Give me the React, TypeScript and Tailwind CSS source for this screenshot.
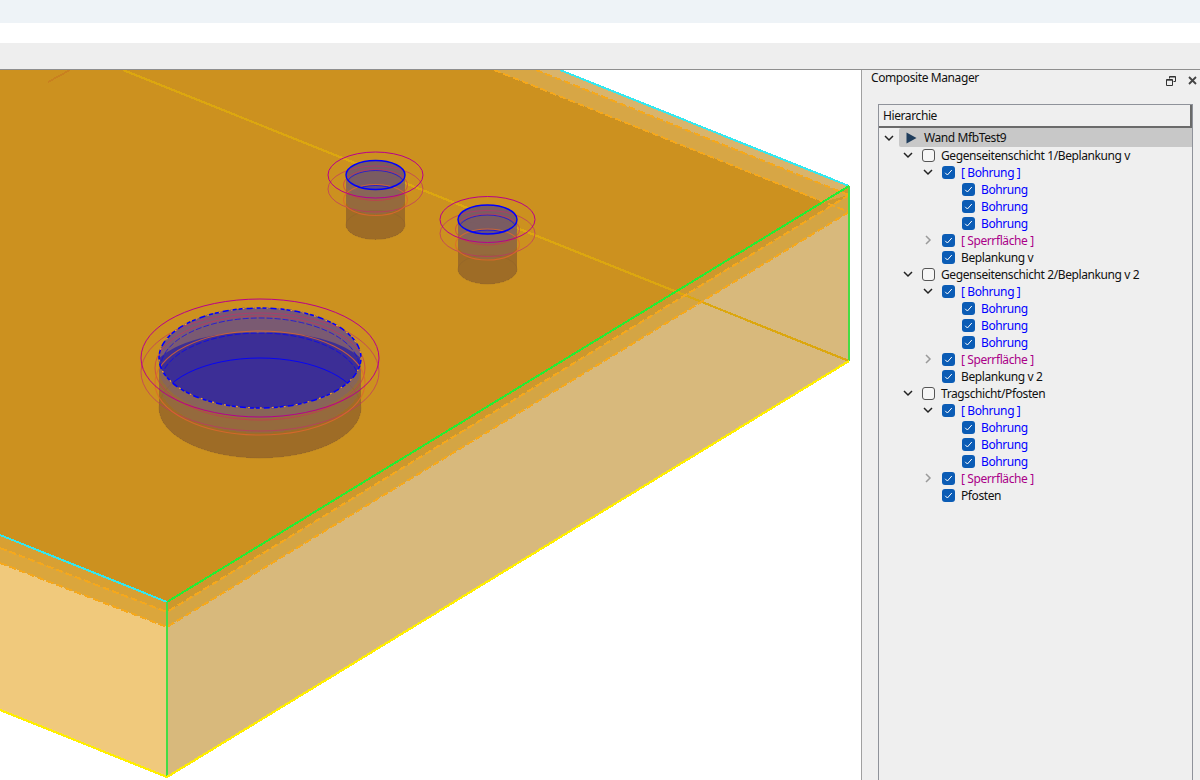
import React from "react";

type Row = { level: number; chev?: "down" | "right"; checked: boolean; text: string; color?: string };

const BLUE = "#0000ff";
const MAG = "#aa0088";

const group = (title: string, leaf: string): Row[] => [
  { level: 1, chev: "down", checked: false, text: title },
  { level: 2, chev: "down", checked: true, text: "[ Bohrung ]", color: BLUE },
  { level: 3, checked: true, text: "Bohrung", color: BLUE },
  { level: 3, checked: true, text: "Bohrung", color: BLUE },
  { level: 3, checked: true, text: "Bohrung", color: BLUE },
  { level: 2, chev: "right", checked: true, text: "[ Sperrfläche ]", color: MAG },
  { level: 2, checked: true, text: leaf },
];

const rows: Row[] = [
  ...group("Gegenseitenschicht 1/Beplankung v", "Beplankung v"),
  ...group("Gegenseitenschicht 2/Beplankung v 2", "Beplankung v 2"),
  ...group("Tragschicht/Pfosten", "Pfosten"),
];

function Chevron({ dir }: { dir: "down" | "right" }) {
  return (
    <svg width="10" height="10" viewBox="0 0 10 10" fill="none">
      {dir === "down" ? (
        <path d="M1 3l4 4 4-4" stroke="#222222" strokeWidth="1.5" />
      ) : (
        <path d="M3 1l4 4-4 4" stroke="#9a9a9a" strokeWidth="1.5" />
      )}
    </svg>
  );
}

function Check({ checked }: { checked: boolean }) {
  return checked ? (
    <span className="flex h-[13px] w-[13px] shrink-0 items-center justify-center rounded-[3px] bg-[#0b5cb5]">
      <svg width="9" height="9" viewBox="0 0 9 9" fill="none">
        <path d="M1.2 4.8l2.2 2.2 4.4-5" stroke="#ffffff" strokeWidth="1" />
      </svg>
    </span>
  ) : (
    <span className="h-[13px] w-[13px] shrink-0 rounded-[3px] border border-[#555555] bg-[#f6f6f6]" />
  );
}

function TreeRow({ row }: { row: Row }) {
  const pad = row.level === 1 ? "pl-[43px]" : row.level === 2 ? "pl-[63px]" : "pl-[83px]";
  return (
    <div className={`relative flex h-[17px] items-center gap-[6px] ${pad}`}>
      {row.chev && (
        <span className="absolute top-[3px] ml-[-19px]">
          <Chevron dir={row.chev} />
        </span>
      )}
      <Check checked={row.checked} />
      <span className="whitespace-nowrap" style={{ color: row.color ?? "#111111" }}>
        {row.text}
      </span>
    </div>
  );
}

const ell = (cx: number, cy: number, rx: number, ry: number) => ({ cx, cy, rx, ry });

function Hole({ cx, cy, rx, ry, ringRx, ringRy, ring2Rx, dash }: { cx: number; cy: number; rx: number; ry: number; ringRx: number; ringRy: number; ring2Rx: number; dash?: boolean }) {
  const o1 = 10;
  const o2 = 25;
  const o3 = 50;
  const id = `clip${cx}`;
  const d = dash ? "6 2" : undefined;
  const inner = rx * 0.985;
  const r2y = ringRy * (ring2Rx / ringRx);
  return (
    <g>
      <defs>
        <clipPath id={id}>
          <ellipse {...ell(cx, cy, rx, ry)} />
        </clipPath>
      </defs>
      {/* extruded hole body */}
      <g shapeRendering="crispEdges">
        <path d={`M${cx - rx} ${cy}V${cy + o3}A${rx} ${ry} 0 0 0 ${cx + rx} ${cy + o3}V${cy}Z`} fill="#70482e" fillOpacity="0.5" />
        <path d={`M${cx - rx} ${cy}V${cy + o2}A${rx} ${ry} 0 0 0 ${cx + rx} ${cy + o2}V${cy}Z`} fill="#7d6484" fillOpacity="0.25" />
        <path d={`M${cx - rx} ${cy}V${cy + o1}A${rx} ${ry} 0 0 0 ${cx + rx} ${cy + o1}V${cy}Z`} fill="#6a5a98" fillOpacity="0.3" />
      </g>
      <ellipse {...ell(cx, cy + o3, rx, ry)} fill="none" stroke="#8a5f2c" strokeWidth="0.6" strokeOpacity="0.6" />
      {/* visible top opening */}
      <ellipse {...ell(cx, cy, rx, ry)} fill={dash ? "#3c2e96" : "#7a5c62"} />
      <g clipPath={`url(#${id})`}>
        <path d={`M${cx - rx - 2} ${cy - ry - 2}H${cx + rx + 2}V${cy + 2}A${rx} ${ry} 0 0 0 ${cx} ${cy - ry + o2}A${rx} ${ry} 0 0 0 ${cx - rx - 2} ${cy + 2}Z`} fill={dash ? "#7a5a72" : "#7a5c62"} />
        {!dash && <ellipse {...ell(cx, cy + o2, rx, ry)} fill="#644f80" />}
        <ellipse {...ell(cx, cy + o1, inner, ry)} fill="none" stroke={BLUE} strokeOpacity="0.65" strokeWidth="1" strokeDasharray={d} />
        <ellipse {...ell(cx, cy + o2, inner, ry)} fill="none" stroke={BLUE} strokeOpacity="0.7" strokeWidth="1" strokeDasharray={d} />
        {dash && <ellipse {...ell(cx, cy + o3, rx, ry)} fill="none" stroke={BLUE} strokeOpacity="0.9" strokeWidth="1" />}
      </g>
      {/* rings */}
      <ellipse {...ell(cx, cy + 14, ringRx, ringRy)} fill="none" stroke="#c03068" strokeWidth="1" strokeOpacity="0.7" />
      <ellipse {...ell(cx, cy + o1, ring2Rx, r2y)} fill="none" stroke="#cc3058" strokeWidth="1" strokeOpacity="0.65" />
      <ellipse {...ell(cx, cy + o2, ring2Rx, r2y)} fill="none" stroke="#e0662c" strokeWidth="1.1" strokeOpacity="0.8" />
      <ellipse {...ell(cx, cy, ringRx, ringRy)} fill="none" stroke="#b8008c" strokeWidth="1" />
      <ellipse {...ell(cx, cy, rx, ry)} fill="none" stroke={BLUE} strokeWidth={dash ? 1.5 : 1.4} strokeDasharray={d} />
      {dash && <ellipse {...ell(cx, cy, rx, ry)} fill="none" stroke="#f4a41c" strokeWidth="1.4" strokeDasharray="2 10" />}
    </g>
  );
}

function Scene() {
  return (
    <svg className="block h-full w-full" viewBox="0 70 861 710" preserveAspectRatio="none">
      <rect x="0" y="70" width="861" height="710" fill="#ffffff" />
      <g shapeRendering="crispEdges">
        {/* left & right side faces */}
        <polygon points="0,535 167,602 167,777 0,710" fill="#f0c97c" />
        <polygon points="167,602 849,186 849,361 167,777" fill="#d8b97c" />
        {/* side bands */}
        <polygon points="0,548 167,612 167,627 0,563" fill="#dba63c" />
        <polygon points="0,535 167,602 167,612 0,548" fill="#d8a033" />
        <polygon points="167,602 849,186 849,212 167,627" fill="#d4a544" />
        <polygon points="167,602 849,186 849,195 167,612" fill="#cd982d" />
        {/* top face */}
        <polygon points="0,70 560,70 849,186 167,602 0,535" fill="#d9b46c" />
        <polygon points="0,70 536,70 849,195 823,202 167,602 0,535" fill="#d7a645" />
        <polygon points="0,70 494,70 823,202 167,602 0,535" fill="#cc911f" />
        {/* hidden edges */}
        <line x1="123" y1="70" x2="849" y2="361" stroke="#dca70f" strokeWidth="2.2" />
        <line x1="70" y1="70" x2="48" y2="82" stroke="#c9801f" strokeWidth="1.8" />
        {/* dashed layer lines */}
        <g stroke="#f5a81c" strokeWidth="2" strokeDasharray="7 3" fill="none">
          <line x1="536" y1="70" x2="849" y2="195" />
          <line x1="494" y1="70" x2="849" y2="212" />
          <line x1="849" y1="195" x2="167" y2="612" />
          <line x1="849" y1="212" x2="167" y2="627" />
          <line x1="0" y1="548" x2="167" y2="612" />
          <line x1="0" y1="563" x2="167" y2="627" />
        </g>
      </g>
      <Hole cx={375.5} cy={175} rx={29.5} ry={14.5} ringRx={47.5} ringRy={23} ring2Rx={32} />
      <Hole cx={487.5} cy={219.5} rx={29.5} ry={14.5} ringRx={47.5} ringRy={23} ring2Rx={32} />
      <Hole cx={260} cy={358} rx={101} ry={50} ringRx={119} ringRy={59} ring2Rx={105} dash />
      {/* box edges */}
      <g shapeRendering="crispEdges">
        <line x1="560" y1="70" x2="849" y2="186" stroke="#33e8f0" strokeWidth="2" />
        <line x1="0" y1="535" x2="167" y2="602" stroke="#33e8f0" strokeWidth="2" />
        <line x1="167" y1="602" x2="849" y2="186" stroke="#22ee33" strokeWidth="2" />
        <line x1="167" y1="602" x2="167" y2="777" stroke="#44dd44" strokeWidth="1.2" />
        <line x1="849" y1="186" x2="849" y2="361" stroke="#44dd44" strokeWidth="1.2" />
        <line x1="0" y1="710" x2="167" y2="777" stroke="#ffee00" strokeWidth="2.2" />
        <line x1="167" y1="777" x2="849" y2="361" stroke="#ffee00" strokeWidth="2.2" />
      </g>
    </svg>
  );
}

export default function App() {
  return (
    <div className="flex h-[780px] w-[1200px] flex-col overflow-hidden bg-white text-[12px] tracking-[-0.4px] text-[#111111]" style={{ fontFamily: '"Noto Sans", sans-serif' }}>
      <div className="h-[23px] bg-[#eef3f7]" />
      <div className="h-[20px] bg-white" />
      <div className="h-[26px] bg-[#eeeeee]" />
      <div className="flex min-h-0 flex-1 border-t border-[#8e8e8e]">
        <div className="h-full w-[861px] shrink-0">
          <Scene />
        </div>
        <div className="flex min-w-0 flex-1 flex-col border-l border-[#a0a0a0] bg-[#efefef]">
          <div className="flex h-[34px] justify-between pl-[9px] pr-[3px]">
            <span className="leading-[16px]">Composite Manager</span>
            <div className="flex items-start gap-[12px] pt-[6px]">
              <svg width="10" height="10" viewBox="0 0 10 10" fill="none" stroke="#333333">
                <path d="M3.5 2.5V.5h6v5h-2M.5 3.5h6v6h-6z" />
                <path d="M3.5 1h6M.5 4.2h6" />
              </svg>
              <svg width="9" height="9" viewBox="0 0 9 9" fill="none" stroke="#444444" strokeWidth="1.8">
                <path d="M1 1l7 7M8 1l-7 7" />
              </svg>
            </div>
          </div>
          <div className="ml-[16px] mr-[7px] flex min-h-0 flex-1 flex-col border-l border-t border-r border-[#8f929a]">
            <div className="flex h-[23px] shrink-0 items-center border-b-2 border-r-2 border-[#6a6a6a] pl-[4px]">Hierarchie</div>
            <div className="relative flex h-[19px] shrink-0 items-center pl-[20px]">
              <span className="absolute left-[5px] top-[5px]">
                <Chevron dir="down" />
              </span>
              <div className="flex h-[19px] flex-1 items-center rounded-l-[2px] bg-[#c8c8c8] pl-[7px]">
                <svg width="11" height="12" viewBox="0 0 11 12" className="mr-[7px]">
                  <path d="M.5 .5l10 5.5-10 5.5z" fill="#1f3d5c" />
                </svg>
                <span>Wand MfbTest9</span>
              </div>
            </div>
            {rows.map((r, i) => (
              <TreeRow key={i} row={r} />
            ))}
          </div>
        </div>
      </div>
    </div>
  );
}
